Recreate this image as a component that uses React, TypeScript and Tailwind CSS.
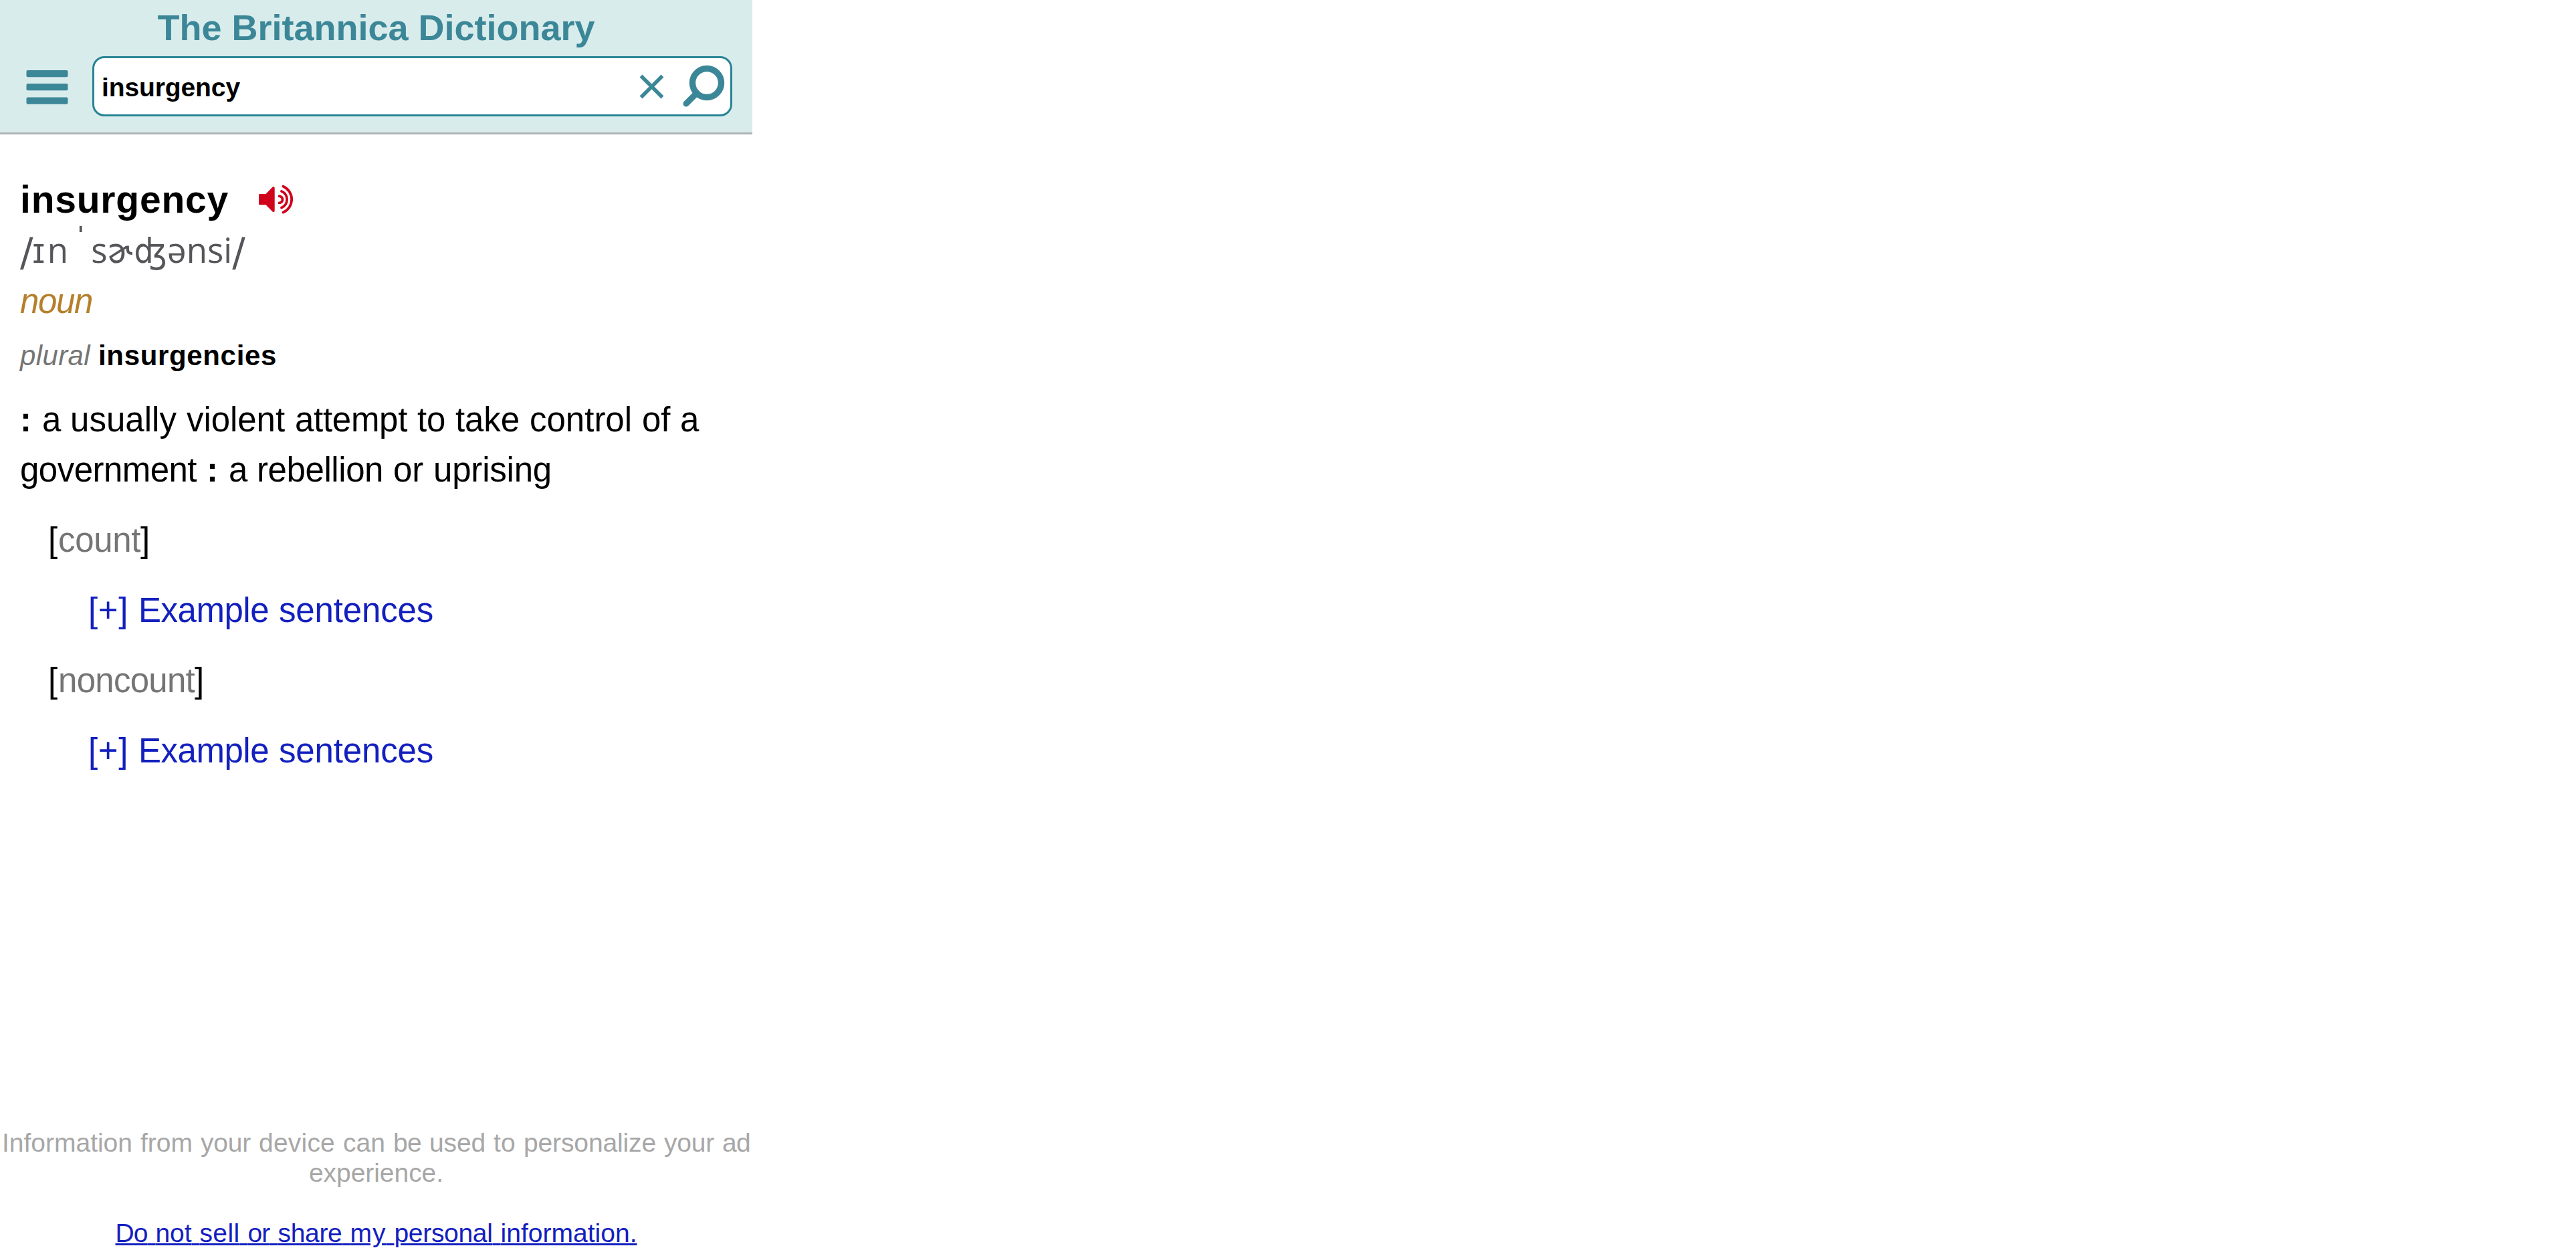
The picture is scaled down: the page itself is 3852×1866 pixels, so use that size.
import React from 'react';

const ctx = document.createElement('canvas').getContext('2d')!;

interface SnappedTextProps {
  text: string;
  size: number;
  variant?: string;
}

// Glyph advances sit on whole CSS pixels of a 3x display, so every word gets
// the letter spacing that makes it that wide.
const SnappedText: React.FC<SnappedTextProps> = ({ text, size, variant = 'normal' }) => {
  const snap = (word: string) => {
    ctx.font = `${variant} ${size * 3}px "Liberation Sans"`;
    const natural = ctx.measureText(word).width;
    const snapped = [...word].reduce(
      (sum, char) => sum + Math.round(ctx.measureText(char).width / 3 + 0.01) * 3,
      0,
    );
    return (snapped - natural) / word.length;
  };

  return (
    <>
      {text.split(/( )/).map((part, i) => (
        <span key={i} style={{ letterSpacing: `${part ? snap(part) : 0}px` }}>
          {part}
        </span>
      ))}
    </>
  );
};

const HamburgerIcon = () => (
  <svg className="mt-[2px] h-[52px] w-[63px]" viewBox="0 0 63 52" fill="#3b8798">
    <rect x="0.5" y="1" width="62" height="10.3" rx="2" />
    <rect x="0.5" y="21" width="62" height="10.3" rx="2" />
    <rect x="0.5" y="41.5" width="62" height="10.3" rx="2" />
  </svg>
);

const SearchIcons = () => (
  <svg className="mr-2 ml-auto h-[84px] w-[134px]" viewBox="0 0 134 84" fill="none" stroke="#3b8798">
    <path d="M8.5 26.5L40.5 58.5M40.5 26.5L8.5 58.5" strokeWidth="5.5" />
    <circle cx="107" cy="37" r="21.5" strokeWidth="9.4" />
    <path d="M76 68L92 52" strokeWidth="9" strokeLinecap="round" />
  </svg>
);

const SpeakerIcon = () => (
  <svg className="h-[46px] w-[56px]" viewBox="0 0 56 46" fill="none">
    <path
      d="M3.5 15Q2 15 2 16.500V29.800Q2 31.300 3.500 31.300H12.500L22.500 41.500Q25.700 43.500 25.700 39.500V6.500Q25.700 2.500 22.500 4.800L12.500 15Z"
      fill="#d0021b"
    />
    <path
      d="M32.500 18.300A5 5 0 0 1 32.500 28.300M36 11A13.300 13.300 0 0 1 36 35.500M38.500 3.700A21.200 21.200 0 0 1 38.500 42.500"
      stroke="#d0021b"
      strokeWidth="3.8"
      strokeLinecap="round"
    />
  </svg>
);

const Slash = () => (
  <span className="inline-block w-[18.7px] align-[-5px] font-['DejaVu_Sans',sans-serif] text-[58px] leading-none">/</span>
);

const Pronunciation = () => (
  <div className="-mt-[3px] h-[80px] font-['Open_Sans',sans-serif] leading-[67px] whitespace-nowrap text-[#55555a]">
    <Slash />
    <span className="inline-block w-[22px] font-['Liberation_Sans',sans-serif] leading-none">ɪ</span>n{' '}
    <span className="-ml-[3px] inline-block w-[24px] align-[17px] font-['Liberation_Sans',sans-serif] leading-none font-bold">
      ˈ
    </span>
    s
    <span className="inline-block w-[40px] font-['DejaVu_Sans_Condensed',sans-serif] leading-none">ɚ</span>
    <span className="inline-block w-[49.5px] font-['DejaVu_Sans_Condensed',sans-serif] leading-none">ʤ</span>
    ənsi
    <Slash />
  </div>
);

const Sense: React.FC<{ label: string }> = ({ label }) => (
  <div className="mt-[30px]">
    <div className="pl-[42px]">
      <SnappedText text="[" size={17} />
      <span className="text-[#757575]">
        <SnappedText text={label} size={17} />
      </span>
      <SnappedText text="]" size={17} />
    </div>
    <div className="mt-[30px] pl-[102px] text-[#1320be]">
      <SnappedText text="[+] Example sentences" size={17} />
    </div>
  </div>
);

const App: React.FC = () => {
  return (
    <div className="flex h-[1866px] w-[1125px] flex-col overflow-hidden bg-white font-['Liberation_Sans',sans-serif] text-black">
      <header className="h-[201px] border-b-3 border-[#aeb4b6] bg-[#d9ecec]">
        <h1 className="h-[84px] text-center text-[54px] leading-[82px] font-bold text-[#3b8798]">
          <SnappedText text="The Britannica Dictionary" size={18} variant="bold" />
        </h1>
        <div className="flex items-center pl-[39px]">
          <HamburgerIcon />
          <div className="ml-9 flex h-[90px] w-[957px] items-center rounded-[18px] border-3 border-[#288494] bg-white pl-[11px]">
            <span className="pt-[3px] text-[39px] leading-[60px] font-bold">
              <SnappedText text="insurgency" size={13} variant="bold" />
            </span>
            <SearchIcons />
          </div>
        </div>
      </header>

      <main className="flex-1 px-[30px] pt-[60px] text-[51px] leading-[75px]">
        <div className="flex h-[75px] items-center">
          <h2 className="text-[57px] font-bold">
            <SnappedText text="insurgency" size={19} variant="bold" />
          </h2>
          <div className="mb-[2px] ml-[43px]">
            <SpeakerIcon />
          </div>
        </div>
        <Pronunciation />
        <div className="text-[#b5802c] italic">
          <SnappedText text="noun" size={17} variant="italic" />
        </div>
        <div className="pt-[14px] text-[42px] leading-[60px]">
          <span className="text-[#757575] italic">
            <SnappedText text="plural" size={14} variant="italic" />
          </span>
          <SnappedText text=" " size={14} />
          <b>
            <SnappedText text="insurgencies" size={14} variant="bold" />
          </b>
        </div>
        <p className="mt-[28px]">
          <b>
            <SnappedText text=":" size={17} variant="bold" />
          </b>
          <SnappedText text=" a usually violent attempt to take control of a government " size={17} />
          <b>
            <SnappedText text=":" size={17} variant="bold" />
          </b>
          <SnappedText text=" a rebellion or uprising" size={17} />
        </p>
        <Sense label="count" />
        <Sense label="noncount" />
      </main>

      <footer className="text-center text-[39px] leading-[45px] text-[#a7a7a7]">
        <p>
          <SnappedText
            text="Information from your device can be used to personalize your ad experience."
            size={13}
          />
        </p>
        <a className="mt-[45px] block text-[#1320be] underline">
          <SnappedText text="Do not sell or share my personal information." size={13} />
        </a>
      </footer>
    </div>
  );
};

export default App;
